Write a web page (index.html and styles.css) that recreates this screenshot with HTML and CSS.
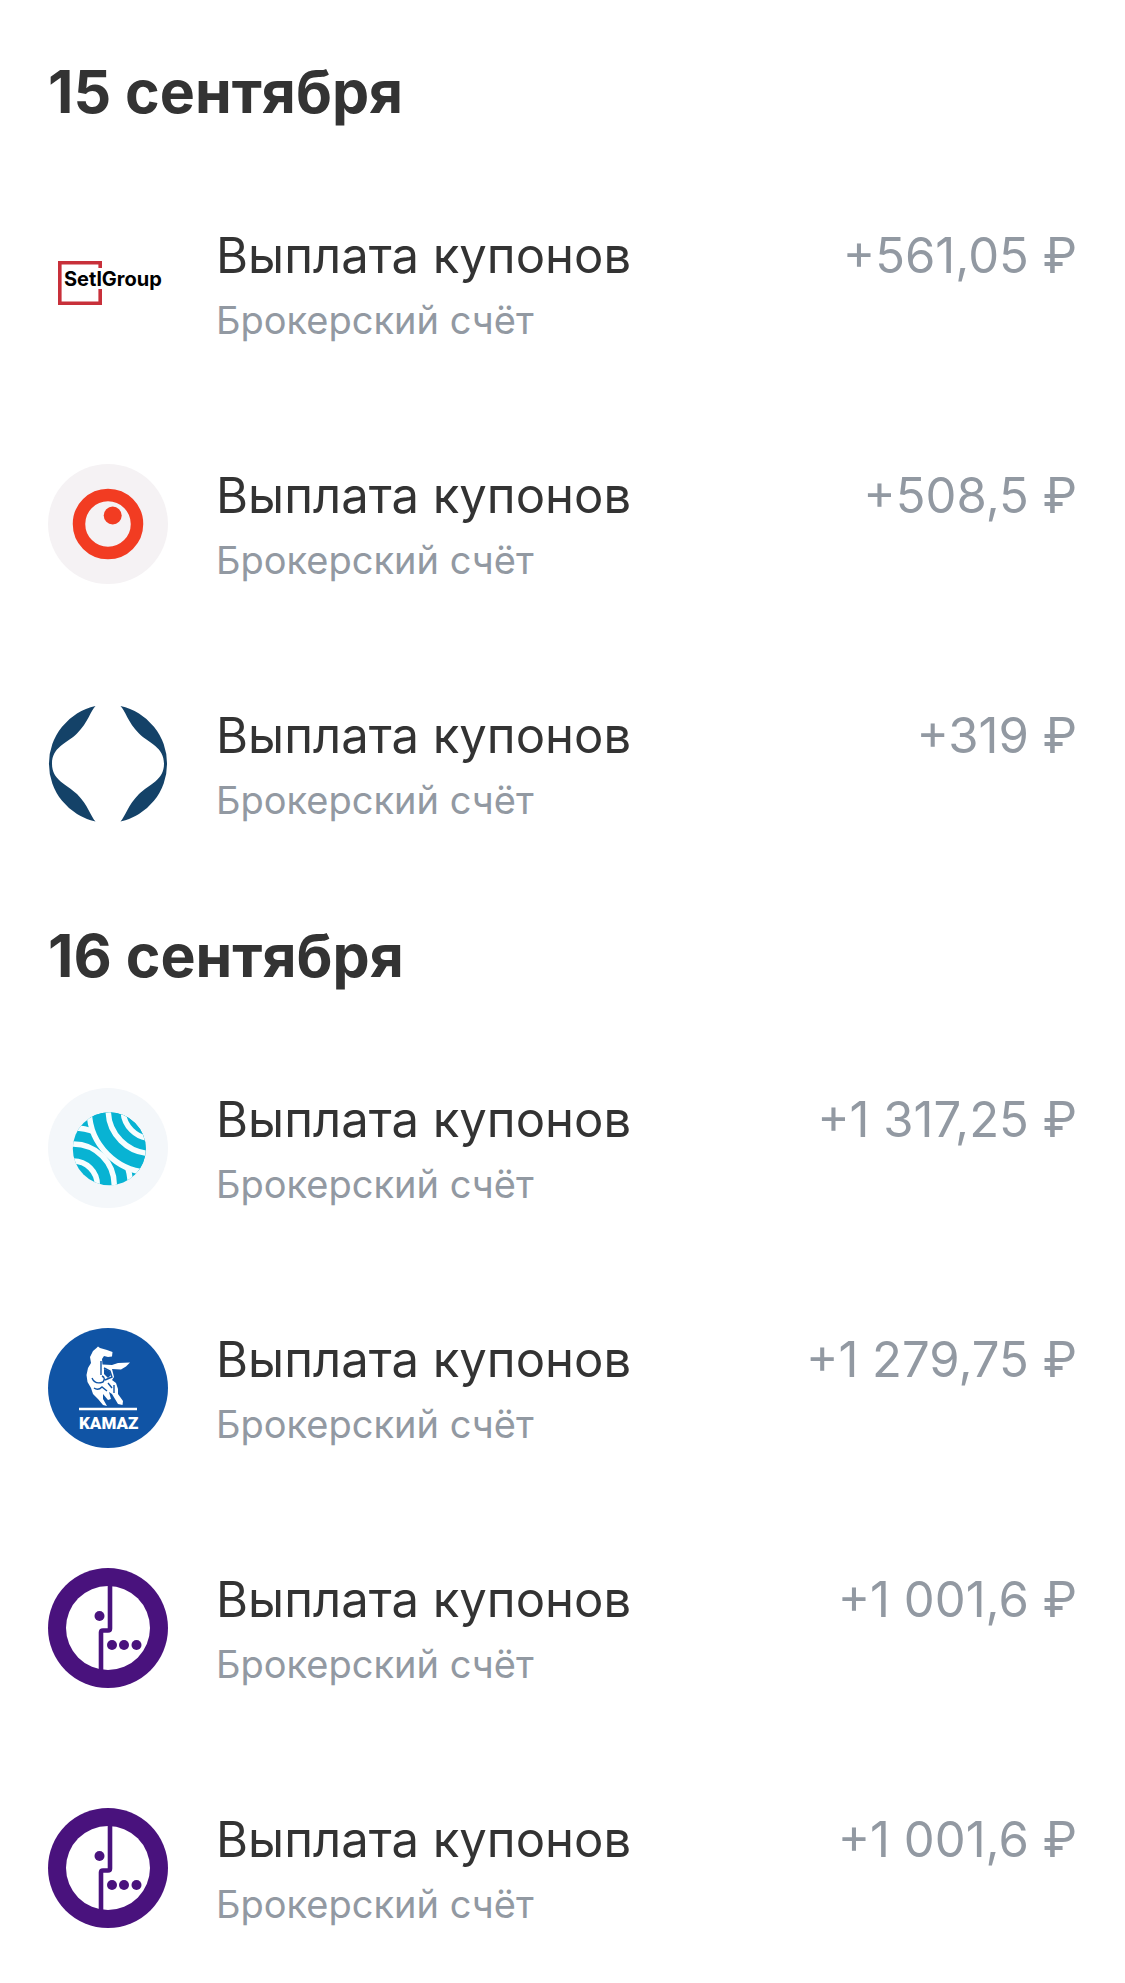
FILE: index.html
```html
<!DOCTYPE html>
<html lang="ru">
<head>
    <meta charset="UTF-8">
    <meta name="viewport" content="width=device-width, initial-scale=1.0">
    <title>Выплаты купонов</title>
    <link rel="stylesheet" href="styles.css">
</head>
<body>

    <!-- Shared logo -->
    <svg class="symbols" aria-hidden="true">
        <symbol id="logo-face" viewBox="0 0 120 120">
            <circle cx="60" cy="60" r="60" fill="#49127d"/>
            <circle cx="60" cy="60" r="42" fill="#fff"/>
            <path d="M62 16V60.500Q62 62.500 60 62.500H55Q53 62.500 53 64.500V104" fill="none" stroke="#49127d" stroke-width="4.600"/>
            <circle cx="51.500" cy="48" r="5" fill="#49127d"/>
            <circle cx="64" cy="77" r="5" fill="#49127d"/>
            <circle cx="76" cy="77" r="5" fill="#49127d"/>
            <circle cx="88.500" cy="77" r="5" fill="#49127d"/>
        </symbol>
    </svg>

    <main class="payments">
        <section class="day">
            <h2>15 сентября</h2>
            <ul class="list">
                <li class="payment">
                    <svg class="logo" viewBox="0 0 120 120" role="img" aria-label="Setl Group">
                        <path d="M52.200 44V38.800H11.800V79.200H52.200V65" fill="none" stroke="#c8303a" stroke-width="3.600"/>
                        <text class="logo-setl" x="16" y="62">SetlGroup</text>
                    </svg>
                    <div class="info">
                        <p class="title">Выплата купонов</p>
                        <p class="account">Брокерский счёт</p>
                    </div>
                    <p class="amount">+561,05 ₽</p>
                </li>
                <li class="payment">
                    <svg class="logo" viewBox="0 0 120 120" aria-hidden="true">
                        <circle cx="60" cy="60" r="60" fill="#f5f2f4"/>
                        <circle cx="60" cy="60" r="29" fill="none" stroke="#f23c22" stroke-width="12.500"/>
                        <circle cx="64.700" cy="51.500" r="9" fill="#f23c22"/>
                    </svg>
                    <div class="info">
                        <p class="title">Выплата купонов</p>
                        <p class="account">Брокерский счёт</p>
                    </div>
                    <p class="amount">+508,5 ₽</p>
                </li>
                <li class="payment">
                    <svg class="logo" viewBox="0 0 120 120" aria-hidden="true">
                        <g fill="#144268">
                            <path d="M47.500 2A59.100 59.100 0 0 0 47.500 117.500C43 113 40 101 29 90C18 80 4 76 4 59.800C4 43 18 40 29 29.500C40 18.500 43 6 47.500 2Z"/>
                            <path d="M72.500 2A59.100 59.100 0 0 1 72.500 117.500C77 113 80 101 91 90C102 80 116 76 116 59.800C116 43 102 40 91 29.500C80 18.500 77 6 72.500 2Z"/>
                        </g>
                    </svg>
                    <div class="info">
                        <p class="title">Выплата купонов</p>
                        <p class="account">Брокерский счёт</p>
                    </div>
                    <p class="amount">+319 ₽</p>
                </li>
            </ul>
        </section>

        <section class="day">
            <h2>16 сентября</h2>
            <ul class="list">
                <li class="payment">
                    <svg class="logo" viewBox="0 0 120 120" aria-hidden="true">
                        <clipPath id="ball"><circle cx="61.300" cy="60.700" r="36.500"/></clipPath>
                        <circle cx="60" cy="60" r="60" fill="#f4f7fa"/>
                        <g clip-path="url(#ball)" stroke="#f6fdfe" stroke-width="5.500">
                            <rect x="20" y="20" width="80" height="80" fill="#08b3d3" stroke="none"/>
                            <circle cx="25.300" cy="97" r="57" fill="none"/>
                            <circle cx="25.300" cy="97" r="41" fill="none"/>
                            <circle cx="25.300" cy="97" r="24" fill="none"/>
                            <circle cx="103.700" cy="22" r="62.500" fill="#08b3d3"/>
                            <circle cx="103.700" cy="22" r="43.500" fill="none"/>
                            <circle cx="103.700" cy="22" r="28.500" fill="none"/>
                        </g>
                    </svg>
                    <div class="info">
                        <p class="title">Выплата купонов</p>
                        <p class="account">Брокерский счёт</p>
                    </div>
                    <p class="amount">+1 317,25 ₽</p>
                </li>
                <li class="payment">
                    <svg class="logo" viewBox="0 0 120 120" role="img" aria-label="KAMAZ">
                        <circle cx="60" cy="60" r="60" fill="#1054a5"/>
                        <!-- Horse -->
                        <path d="M48.500 20L50 18.500L52 20L59 22L64.500 24L64 28.500L60 29L56 28L54 31L54.500 36.500L64 37L70 35L82 34.500L78 38.500L73 41.500L64 41L66 49L64 52L68 55L70 61L70 66L75 73L74.500 77L70 76L67 71L64 66L61 64L63 71L60 72L55 66L55 71L59 78L55 77L50 71L45 66L43 60L39.500 54L38.500 47L40 40L43 35L42 29L45 23Z" fill="#fff"/>
                        <path d="M53 33V47M56 40L62 43L64 49L57 52M44 50Q47 57 55 54Q58 50 54 48M46 60Q50 63 54 59L59 63M60 55L64 60M66 57V65" fill="none" stroke="#1054a5" stroke-width="1.400"/>
                        <path d="M56 41L61.500 43L63 47L60 50L56 46Z" fill="#1054a5"/>
                        <path d="M31 81H89" stroke="#fff" stroke-width="2.400"/>
                        <text class="logo-kamaz" x="31" y="101">KAMAZ</text>
                    </svg>
                    <div class="info">
                        <p class="title">Выплата купонов</p>
                        <p class="account">Брокерский счёт</p>
                    </div>
                    <p class="amount">+1 279,75 ₽</p>
                </li>
                <li class="payment">
                    <svg class="logo" aria-hidden="true"><use href="#logo-face"/></svg>
                    <div class="info">
                        <p class="title">Выплата купонов</p>
                        <p class="account">Брокерский счёт</p>
                    </div>
                    <p class="amount">+1 001,6 ₽</p>
                </li>
                <li class="payment">
                    <svg class="logo" aria-hidden="true"><use href="#logo-face"/></svg>
                    <div class="info">
                        <p class="title">Выплата купонов</p>
                        <p class="account">Брокерский счёт</p>
                    </div>
                    <p class="amount">+1 001,6 ₽</p>
                </li>
            </ul>
        </section>
    </main>

</body>
</html>
```
FILE: styles.css
```css
/* Basic Reset & Body Styling */
* {
    box-sizing: border-box;
    margin: 0;
    padding: 0;
}

body {
    font-family: Inter, Roboto, "Noto Sans", sans-serif;
    background-color: #fff;
    color: #333;
}

.symbols {
    display: none;
}

/* Day group */
.day {
    padding: 56px 48px 0;
}

.day h2 {
    font-size: 59px;
    line-height: 72px;
    font-weight: 700;
    margin-bottom: 16px;
}

.list {
    list-style: none;
}

/* Payment row */
.payment {
    display: flex;
    align-items: flex-start;
    gap: 48px;
    padding: 80px 0 40px;
}

.logo {
    flex: none;
    width: 120px;
    height: 120px;
}

.info {
    flex: 1;
}

.title,
.amount {
    font-size: 49px;
    line-height: 64px;
}

.account {
    margin-top: 8px;
    font-size: 38px;
    line-height: 48px;
    color: #9299a2;
}

.amount {
    color: #9299a2;
    white-space: nowrap;
}

/* Text inside logos */
.logo-setl {
    font-size: 20px;
    font-weight: 700;
    fill: #000;
}

.logo-kamaz {
    font-family: Roboto, sans-serif;
    font-size: 17px;
    font-weight: 900;
    fill: #fff;
}
```
